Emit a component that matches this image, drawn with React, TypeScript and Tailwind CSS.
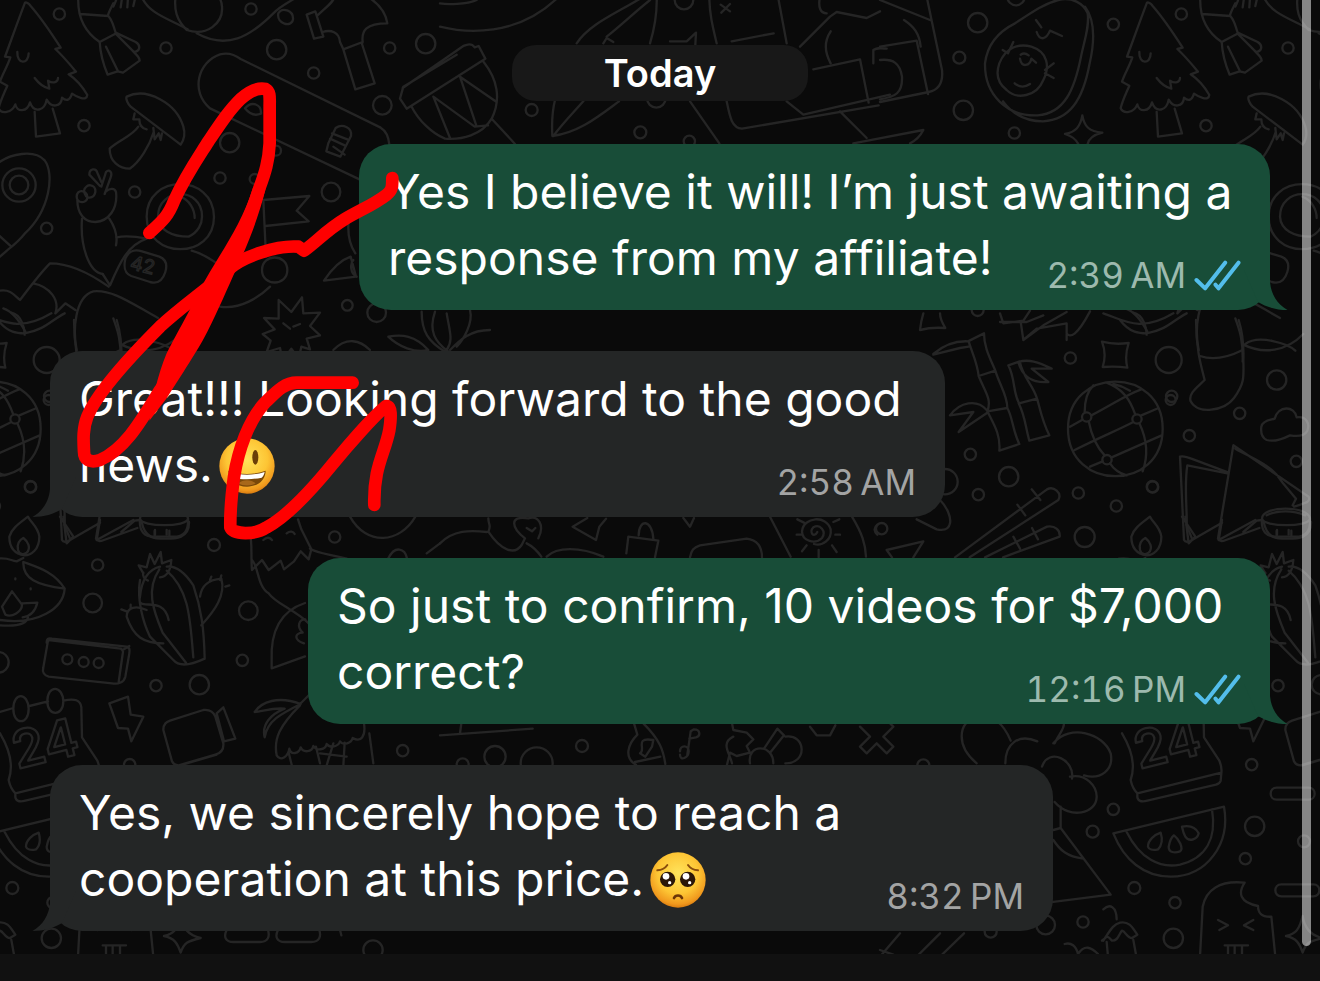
import React from "react";
import { clsx } from "clsx";

type Message = {
  id: number;
  lines: string[];
  time: string;
  mine: boolean;
  width: string;
  emoji?: "grin" | "pleading";
};

const MESSAGES: Message[] = [
  { id: 1, lines: ["Yes I believe it will! I’m just awaiting a", "response from my affiliate!"], time: "2:39\u2009AM", mine: true, width: "w-[911px]" },
  { id: 2, lines: ["Great!!! Looking forward to the good", "news."], time: "2:58\u2009AM", mine: false, width: "w-[895px]", emoji: "grin" },
  { id: 3, lines: ["So just to confirm, 10 videos for $7,000", "correct?"], time: "12:16\u2009PM", mine: true, width: "w-[962px]" },
  { id: 4, lines: ["Yes, we sincerely hope to reach a", "cooperation at this price."], time: "8:32\u2009PM", mine: false, width: "w-[1003px]", emoji: "pleading" },
];

// Wallpaper artwork is drawn on a 3x grid and repeats every 3366 units
const TILE = 3366;

const DOTS: [number, number, number][] = [
  [178, 42, 17], [498, 144, 17], [830, 149, 29], [941, 219, 17], [1169, 144, 17], [1277, 131, 29],
  [1147, 316, 28], [252, 377, 17], [689, 428, 29], [828, 452, 15], [660, 534, 17], [764, 537, 15],
  [993, 576, 28], [404, 576, 17], [140, 685, 17], [753, 27, 17], [1042, 916, 16], [1130, 938, 28],
  [57, 555, 28], [57, 555, 50], [92, 1461, 17], [146, 1200, 15], [293, 1695, 17], [278, 1809, 28],
  [642, 1635, 18], [1004, 1611, 17], [745, 1832, 28], [-5, 1987, 31], [468, 2057, 17], [598, 2054, 29],
  [727, 1981, 17], [1208, 2252, 17], [1119, 2850, 29], [202, 1978, 15], [251, 1986, 15], [296, 1989, 15],
  [1595, 330, 18], [1921, 397, 18], [2068, 424, 17], [2052, 0, 28], [1969, 295, 28],
  [2933, 68, 29], [2878, 173, 18], [2890, 331, 29], [3043, 399, 17], [3340, 73, 17], [2933, 930, 18], [3048, -10, 26],
  [3211, 1074, 17], [3506, 1080, 39], [3830, 1140, 29], [3515, 1189, 17], [3568, 1307, 17], [3719, 1240, 17],
  [3889, 1384, 17], [2911, 1363, 17], [3026, 1430, 29], [2935, 1484, 17], [2835, 1445, 38], [3235, 1479, 17],
  [3457, 1460, 17], [3349, 1518, 17], [3254, 1611, 30], [2645, 1586, 17],
  [3340, 2428, 17], [3278, 2495, 18], [3764, 2479, 29], [3736, 2576, 17], [3403, 2664, 18], [3525, 2708, 17],
  [3520, 2815, 29], [3249, 2766, 17], [3137, 2775, 28], [3755, 2294, 17], [3912, 2524, 18], [2972, 2795, 18],
  [1485, 2270, 32], [1746, 2238, 18], [1388, 2293, 18], [1610, 2290, 48], [2770, 2296, 18],
  [3260, 1251, 14], [3411, 1257, 14], [3321, 1379, 14],
];

const SHAPES = [
  // pine tree
  "M75 8C55 60 30 130 15 170l16 2C22 200 8 220 0 245l22 12C10 285 0 305-4 325c8 18 40 14 50-12 4 24 36 24 44-6 12 34 44 26 50-8 14 26 44 22 46-6 14 12 24 8 30-12 14 10 44 24 46 4-14-24-32-46-56-62l22-8c-20-24-40-48-62-68l16-4C148 90 120 50 92 18c-6-8-14-12-17-10Z",
  "M104 336l4 74 72-10-22-74M52 156c-2 38 34 38 34 4M104 234c12 16 28 28 44 32l-4-24c16 10 30 4 30-8",
  // bow
  "M235-10c-4 70 26 110 64 136 2 30 10 66 24 98l30-10 16 4 50-36c0-10-10-18-18-26 20-2 22-20 6-30l-60-28c-6-16-8-34-22-50l-84-6M340 10c-10 20-14 26-16 36M299 126l50-26M318 140l36 74M350 104l50 50",
  "M340 20c4-10 8-14 10-28M362 22l4-28M382 22l2-30M400 18l6-26M425-10c20 50 80 66 138 98",
  // cable
  "M560 90C530 60 520 30 528-20M560 90c60 20 110-20 106-70 0-20-10-30-16-40M590 100c90 50 160 10 230-60 20-20 40-30 60-42M835 40c10-20 46-10 44 18-4 26-50 14-44-18Z",
  // hammer
  "M920 44l26-10 24 76-28 6ZM955 44c20-20 50-40 50-60M968 96c24-8 50 0 52 30l10 22 36 120 58-18-38-118 2-6c-4-34 10-56 74-56-6-40-30-60-50-74M1030 148l58-22",
  // skateboard
  "M630 325c-60-50-36-140 30-162 24-6 46 2 62 14l420 206c20 12 24 30 26 50M630 325l450 214M735 325c20-24 50-12 48 16-20 8-34 2-48-16Z",
  // bolt between the wheels
  "M985 430l22-46c20-14 50-2 46 24l-32 62-42-16ZM996 400l46 18M990 416l44 20M1000 440l34 24",
  // mushroom
  "M380 290c60-30 150 20 170 90 6 20 2 40-8 54L392 320c-8-8-16-24-12-30ZM404 340l-4 18 18 0c0 20 10 28 22 30M460 384l4 34 12-18 6 20 4-20M415 380c-20 30-60 40-86 66 0 40 30 60 60 60 30-20 60-70 72-110",
  // map pin
  "M0 485c30-20 100-40 134-4 30 40 16 150-60 220-16 20-40 40-50 48L0 770M-10 700l44 40",
  // peace hand
  "M300 558l-32-34c0-20 20-20 24-6l12 28M304 560l14-44c10-10 20 0 14 16l-18 50M230 590c0-24 30-20 32 0 0 24-32 20-32 0ZM252 572c6-24 36-20 34 4-4 20-30 26-34-4ZM232 600c0 40 20 66 54 66 40-2 68-40 62-90-4-14-20-10-30-2M246 656c-6 80 20 160 62 166M328 656c20 30 24 60 20 80",
  // magnifier
  "M440 650c0-130 200-130 202 0 0 130-202 130-202 0ZM474 650c0-90 134-90 132 0 0 20-10 46-40 60-50 0-90-20-92-60ZM540 590c30 10 44 40 44 64M575 752c40 10 80 40 110 66M350 712c30-6 60-2 90 4M440 716c-60 20-84 80-110 140l-22-34",
  "M376 776c10-24 30-28 50-22l52 16c20 8 24 26 18 46-8 26-24 36-46 30l-56-18c-20-8-24-24-18-52Z",
  // shoe
  "M0 872c30-4 40 10 60 28 30-40 60-80 90-110 60 0 120 30 176 70M100 850c50 10 80 50 66 90l30-30 30 20M10 925c30 10 50 40 66 70M230 1050c-12-60-6-160 50-176 60-6 120 40 194 80M340 955c10 30 24 60 22 130M370 1032c40-30 130 0 150 20",
  // flag
  "M790 600l138-12-38 44 36 32-130 14M790 600l8 170M786 810c0-50 76-50 76 0s-76 50-76 0ZM660 920c60 10 120-30 150-60",
  // whistle
  "M1046 660c-4 40 0 70 20 100M972 842c20-30 44-60 80-72l16 60ZM1060 780c-10 10-10 40 10 50",
  // spiky star
  "M836 900l38 36 32-44 4 48 50-2-30 40 30 28-40 10 10 32-26-8-8 36-22-30-26 36-8-38-40 12 12-34-24-20 36-14-32-34 44 2ZM850 970l20 16M880 980l20-8",
  // leaves
  "M1165 1010c40-8 80-4 120 40M1165 1010c30 30 80 50 120 40M1265 935c0 60 20 90 70 120M1305 935c-20 60 0 90 40 120M1350 1050c30-30 60-60 120-60M1340 940c10 60 20 80 0 110M1410 930c10 40-20 90-40 110",
  "M1000 1050c40-40 80-30 110 0",
  // oil lamp
  "M-10 1676c40-4 40 6 60 8M50 1684l20-10M70 1686c-2 50 40 70 124 80-30-50-80-64-124-80ZM194 1766c-4 60-80 110-194 94M0 1876c50 4 80-2 84-24M6 1820l30-46 30 40c0 20-30 40-50 30ZM66 1810l46-2c-6 26-20 40-44 44M46 1735v3M92 1765v3",
  // dog
  "M748 1590c10 30 4 80 8 120l30-30 20 30 36-28 10 26 30-24 20-30 24 24 8-30-30-60-10-30M756 1680c20 20 16 80 50 100 20 30 80 50 120 90M930 1646c30 16 50 14 110 30M790 1620c10-10 20-8 26 0M860 1600c10-8 20-6 24 2",
  // cactus
  "M430 1720l-14-24 24 6 10-40 14 30 18-36 4 34 28-10c-2 30-12 50-34 52M430 1718c-4 10 4 20 14 24M506 1860c-16-80-100-20-86-70 4-40 20-80 60-90M478 1708c-40 60-20 120 10 190l70 90M500 1712c70 60 70 150 80 260M420 1740c-10 60 10 130 30 170l70 70c20 24 60 12 94-4-2-90-10-150-34-220-20-30-50-60-80-56M600 1790c4-30 20-50 64-54 14 50-20 96-60 140M440 1830c-30-14-60-10-60 20 20 60 50 80 110 80M630 1740l4-10M660 1740l4-14M380 1834l-16-6M392 1826v-12M676 1760l12-4",
  // cassette
  "M140 1928c0-14 6-14 16-12l224 24c8 2 10 10 8 20l-12 70c-4 16-20 24-40 20l-190-20c-14-4-20-14-16-28l14-80ZM146 1920l216 26c8 4 8 10 6 16l-12 84M368 1950l20-12",
  // calendar
  "M0 2136l40-12M88 2118l56-14M190 2102c34-8 52-2 54 20l2 90 46 70c6 14 8 24 6 38l-2 22c-2 8-8 10-14 12M0 2200c30 50 40 100 26 140 4 20 10 30 20 40l252-62M46 2380l0 12c4 14 16 14 30 10l206-48M40 2126c0-50 44-50 46 0 0 50-46 50-46 0ZM142 2104c0-50 46-50 48 0 0 46-48 46-48 0Z",
  // lightning
  "M328 2110l56-20 8 54 38 6-36 74-10-38-30-2Z",
  // video camera
  "M490 2190c0-20 10-24 20-28l100-32c20-2 30 4 36 20l24 80c2 20-10 30-24 34l-110 32c-10 0-16-4-20-12ZM650 2140l20-18 36 94-34 8ZM540 2296l110-32",
  // palm hut
  "M764 2136c20-30 70-50 138-24-60 30-100 50-108 100-10-40 20-70 60-86-40-4-70 10-90 10ZM900 2112l30-30M900 2116c-60 60-80 100-70 150 12 20 34 4 38-20 4 20 30 16 34-4 8 18 34 14 38-4 10 16 36 12 40-6 10 14 36 8 40-8 10 14 34 6 38-10 24 14 40-4 34-44M866 2258l10 40M948 2240l12 50M1000 2230l-20 66M1034 2228l-4 70M1108 2200l12 90M960 2260l80 10",
  "M815 1985c-4-80 20-150 100-176M815 1985l0 20 100-36M912 1930c-30-10-30-30-4-32-20-20-10-40 8-40",
  // drum
  "M1210 260l160-96M1210 260l-10 36 20 30M1220 326l236-150-20-38-12 4c-10-14-24-8-34-4l-182 126M1235 320c20 40 60 80 100 96 50 4 110-10 140-60 30-60 16-120-24-170M1300 290l50 124M1300 290l124 90 40-4M1380 230l50 150M1380 230l110 76M1475 356l70 76",
  "M1320 80c80 20 230 30 350-84M1320 10c20 4 80 4 110-10",
  // paper plane, ship
  "M1730 130c40-60 120-90 200-140M1820 110c50-40 80-70 130-110M1970-10c2 60-8 100-20 140M1810 130l10-16 20 12M2010 124l50 0 28-26-2 36M1665 300c-10 40-10 70-8 108 80-10 140-60 200-104M1660 408c30-40 60-70 90-104M2070 304l88 126",
  "M2128-10c0 50 10 90 22 140M2334-10l26 140M2195 124l126-24M2162 14l28 20M2190 12l-26 26M2180 304c10 50 16 80 46 82l410-70M2360 304l50 40 260-60M2440 208l140-30 26 130M2520 334l80 80",
  "M2400 140l90-90 20-14 90 18 40-20M2460-10c-6 30 0 50 20 50M2492 94c-20 30-20 60 0 96M2620 190v-40c10-8 20-6 40-4M2560 430l210-40c-10 20-20 30-40 40",
  // laptop bag
  "M2640 140l110-18 34 160M2712 60c30 20 46 40 50 80M2640 0l150 60M2780-10l46 220c4 40-10 60-40 66l-146 30M2640 180c40-4 60 10 66 50 2 50-20 60-66 68",
  // avocado
  "M2955 190c6-50 30-90 90-120 60-40 90-60 130-70 40-10 76 10 88 40 6 40-10 80-20 130-20 100-50 170-130 176-90 4-160-60-158-156ZM3255 20c30 40 30 100 14 170-20 110-60 170-140 174-50 0-90-20-120-60M2998 190c20-50 60-60 96-50 50 16 56 60 36 100-20 50-80 60-110 30-26-20-34-46-22-80M3008 150l16 10 16-34M3135 210l26-20M3135 220l26 14M3108 60l16 22M3110 96c10 30 30 20 40-4l36 16M3060 176c4 30 30 20 34 0l14 12M3044 250c16 14 34 10 46 2M3062 164c6-4 16-4 24 2",
  // sparkles
  "M3247 346c6 34 20 48 60 52-24 6-40 14-44 34M3247 346c-6 34-20 50-52 56 20 6 32 14 40 30M2770 940c-6 20-8 30-10 50 30-8 50-8 76-6-10-16-16-30-16-44M3306 1025c30 8 50 8 80 4-8 24-10 50-4 74-26-4-50-4-74-2 8-24 8-50-2-76Z",
  // crown and leaf under the first message
  "M3000 940l10 30 60-8 20-30M3062 965l8 55 60-44 70-40M3070 1020l40-34 90-16 0 50M3200 1000c10 14 30 10 70-66M3310 940c60 20 110 60 210 0M3360 960c30 40 60 40 80 40 60-10 80-40 120-60M3440 1004c0-20-10-60-40-66M3000 966l80 0 50-20",
  // bamboo
  "M2800 1062c30-26 60-40 104-38l48-24c0 40 16 70 34 112l0 0-50 16c-4-40-20-70-30-104M2800 1064l80-20 26-4M2936 1128c20 50 40 70 26 106l60-10c0-40-24-70-36-112M2962 1234c20 40 40 70 36 118l60-20c-20-40-20-80-36-108M2850 1246c30-40 80-50 110-16M2850 1246l70-10-44 60 86-58M3025 1096l34-12c10 50 40 70 52 112l-54 14c-20-40-10-70-32-114ZM3056 1210c20 40 20 70 32 112l60-16c-20-40-26-70-36-108M3055 1086c30-10 60 0 100 20l-60 0 50 40c-50 4-80-20-90-60",
  // ball
  "M3204 1286c0-188 284-188 284 0 0 190-284 190-284 0ZM3254 1236c0-30 6-60 26-80M3210 1280l36-20M3274 1246c60-30 100-60 150-78M3224 1350c80-40 130-60 176-84M3424 1246l52-22M3270 1400l38-16M3335 1372l150-66M3266 1264c8 40 20 74 48 102M3320 1148c50 20 70 50 86 96M3340 1152c20 4 40 14 50 20M3418 1270c24 50 26 100 10 144M3330 1390c10 16 30 30 50 36",
  // stocking
  "M3588 960c0 90 16 140 26 180-20 20-50 40-42 64 20 40 100 30 130-10 30-40 30-60 28-112 2-50-4-90-14-122M3600 1068c40 14 80 6 128-18M3730 1034c60 30 130 20 180-32",
  // cloud
  "M3784 1280c4-20 30-20 40-24 10-40 60-40 66-4 30-4 40 20 32 40-10 20-40 16-52 14-20 10-50 20-70 14-16-8-18-24-16-40Z",
  // playing cards
  "M3540 1370c8-4 20 0 40 8l106 40M3540 1370l12 250c4 8 14 6 24 0l90-52M3562 1396l120 24M3562 1396c-10 60 0 140-2 180l16 40M3700 1336c-10 60-30 180-46 280 4 10 14 8 24 4l100-36M3700 1336l226 154c8 20-20 20-44 30M3706 1346c60 34 110 50 140 100l42 50-10 20M3730 1596l40-34 16-2",
  // bowl
  "M3786 1556c0-40 140-40 144 0-2 26-140 26-144 0ZM3786 1556c-4 40 16 54 40 54h70c30-4 36-30 34-56M3830 1592v14M3874 1592v14M3800 1546c30-16 80-16 116 0",
  // chopsticks
  "M2865 1672l276-204c20-10 46 10 34 32l-266 172M3095 1468l26 32M3052 1514l24 32M2955 1672l186-92c24-4 40 10 38 30l-170 62M3096 1584l18 34M3040 1610l20 36",
  // flame
  "M3394 1610c6-24 30-40 56-60 10 20 30 30 34 60 0 40-26 56-44 56-26-4-46-20-46-56ZM3420 1650c-4-20 4-30 16-36 14 10 24 30 10 44-10 8-22 4-26-8",
  "M2820 1500c20 20 34 50 30 70-4 20-20 22-40 18l-60-30M2660 1650l110-26-30 48M2660 1650l16 22",
  // clouds near the bottom
  "M2930 2290c-60-50-60-120 0-140 50-6 80 20 102 72M3016 2290c0-60 40-90 96-66M3160 2230c50-60 150-30 172 30 10 50-30 80-80 66M3192 2170c0 20-14 30-28 60M3126 2300c20-60 100-20 90 36M3210 2330c50-10 80 30 80 60 0 50-80 70-126 16M3182 2420v64l150 200-190 24M3160 2490l22-6M3160 2520c20 30 40 50 90 56",
  // watermelon
  "M3340 2500l332-80c20 110-50 210-160 210-80 0-140-50-172-130ZM3380 2496c40 80 100 110 160 98 80-20 110-80 96-166M3444 2540c0-20 20-36 38-42 6 20 6 36-8 50-16 4-28 0-30-8ZM3506 2540c4-20 10-30 16-34 14 10 30 40 18 48-16 6-34 4-34-14ZM3546 2480c20-4 40 0 50 20-4 20-30 26-40 10-6-10-8-20-10-30Z",
  // popsicle
  "M3600 2870l8-150c10-50 50-80 126-72-20 30-16 60 40 70 0 20 10 34 40 32l12 120M3654 2760l30 16-26 14M3760 2760l-28 16 28 14M3674 2836h70M3684 2836v26M3704 2836v26M3726 2836v26",
  // dashes
  "M3830 2363h96c24 0 24 36 0 36h-96c-24 0-24-36 0-36ZM3844 2653h96c24 0 24 36 0 36h-96c-24 0-24-36 0-36Z",
  "M3858 2808c30-6 40-20 50-60 6 40 30 60 60 66-40 10-50 14-60 44-10-30-20-44-50-50Z",
  "M680 2790c-10 20-4 36 20 36h80c24 0 30-16 24-36M834 2790c-10 20-4 36 20 36h80c24 0 30-16 24-36M1020 2790l4 16",
  // cupcake
  "M3310 2728c20-20 40-6 40 30M3310 2822c20-30 30-50 50-54 30-6 40 20 52 36l-16 10c-14 0-20-20-30-22-10 10-10 30-30 30-10-10-10-20-30 0M3324 2870l-4-44M3400 2820l8 44M3194 2832c20-6 34 6 40 30 20-30 40-20 60 0",
  "M2640 2870l60-70M2750 2870l70-70M2820 2870l72-70M2640 2850l40 14",
  // strip between the second and third messages
  "M1465 1555c0 20 10 20 0 40 40 60 80 70 100 40l10-20c-40-30-50-70 10-60 30-10 50 20 30 60M1320 1630c40-40 90-40 140-34M1580 1630c20 10 30 20 44 40M1640 1670c30-30 100-30 170 0M1580 1584l16 10 10-10M1718 1580l70 40 10-40 20-24M1718 1580l44-26M1885 1610l-6 50M1885 1610l90 12-10 50M1916 1606c0-50 40-50 44 10M2050 1554l20 26 12-26M2070 1672c4-20 10-30 30-36l140-20c30 4 46 20 46 56M2310 1550l62 120M2556 1550c30 50 40 80 42 120M2632 1574c-12 10-10 20 0 30",
  // sun
  "M2452 1596c-10 20-26 0-12-14 20-12 40 12 26 32-20 20-60 10-60-20 4-44 74-50 86-6 4 30-24 52-50 44M2456 1650v22M2496 1636l14 20M2420 1636l-14 18M2506 1604h14M2390 1604h14M2500 1566l18-8M2412 1568l-20-10",
  // strip between the third and last messages
  "M1320 2206l278-20M1384 2170l-4 30M1902 2170l10 34c-30 30-40 70-4 90M1930 2170c50 50 60 80 66 122M1905 2286l76-16M1960 2220c-60-10-20 30-40 40l16 10 20-30ZM2040 2254c0-20 26-20 26 0s-26 30-26 10M2062 2264l10-70 10-6c20 0 20 20 6 24l-20 4M2196 2170l4 20 40 8 20 20-20 20 10 20-40 10-20-10-10 40M2200 2210c-40 20-10 50-4 80M2292 2246l40-60 20 20-40 50M2356 2210c60-10 70 80 0 80M2250 2290c-10-60 70-60 70 0M2430 2180l20 26h40l16-30M2580 2180l30 30-30 30 20 20 30-30 30 30 20-20-30-30 30-30-20-20",
  "M190 1550l10 80 20-20-40-60M300 1560l-10 60 110-60M425 1566c10 50 40 50 70 50s74 0 72-50M465 1590v14M500 1590v14M1050 1550c50 90 150 80 196 0M1165 1675c20-40 50-30 56 0M1280 1660l40-30",
];

function Doodles() {
  return (
    <svg aria-hidden="true" viewBox="0 0 3960 2862" preserveAspectRatio="xMinYMin slice" className="absolute inset-0 h-full w-full">
      <g fill="none" stroke="#252525" strokeWidth="7" strokeLinejoin="round" strokeLinecap="round">
        {[-TILE, 0, TILE].map((shift) => (
          <g key={shift} transform={`translate(${shift} 0)`}>
            {DOTS.map(([x, y, r]) => (
              <circle key={`${x}-${y}-${r}`} cx={x} cy={y} r={r} />
            ))}
            {SHAPES.map((d) => (
              <path key={d} d={d} />
            ))}
            {shift >= 0 && (
              <text x="52" y="2308" fontSize="156" fontWeight="600" fontFamily="Inter, sans-serif" transform="rotate(-14 52 2308)">24</text>
            )}
            {shift === 0 && (
              <text x="388" y="806" fontSize="58" fontFamily="Inter, sans-serif" transform="rotate(14 388 806)" strokeWidth="4">42</text>
            )}
          </g>
        ))}
      </g>
    </svg>
  );
}

function Scribble() {
  return (
    <svg aria-hidden="true" viewBox="0 0 3960 2862" preserveAspectRatio="xMinYMin slice" className="pointer-events-none absolute inset-0 h-full w-full">
      <g fill="none" stroke="#ff0000" strokeWidth="38" strokeLinecap="round" strokeLinejoin="round">
        <path d="M448 699C485 665 504 650 522 603C555 530 590 480 626 423C665 365 690 328 722 297C750 272 775 262 797 267C812 275 809 295 809 320V430C806 485 795 520 778 565C755 640 720 720 680 800C630 920 580 1040 480 1170C430 1250 380 1345 300 1380C270 1390 252 1380 252 1355C250 1320 248 1285 262 1250C290 1180 380 1080 480 980C550 915 620 870 690 805C730 770 830 735 895 740L912 752C950 725 980 690 1035 657C1080 630 1120 615 1160 584C1180 568 1176 555 1177 534" />
        <path d="M1058 1148H890C850 1148 825 1180 795 1208C745 1262 715 1350 702 1430C694 1490 690 1540 691 1582C700 1604 765 1606 800 1582C860 1550 935 1470 1000 1390C1045 1335 1120 1250 1158 1218C1175 1216 1174 1250 1168 1290C1155 1360 1120 1400 1123 1515" />
      </g>
      <path d="M797 565C780 640 745 730 712 800C680 870 655 930 622 995C600 1040 560 1100 500 1195L448 1262C455 1200 475 1120 500 1060C530 1000 560 950 600 870C650 770 720 690 760 560Z" fill="#ff0000" />
    </svg>
  );
}

function Ticks() {
  return (
    <svg aria-hidden="true" viewBox="946 776 140 93" className="h-[31px] w-[47px]" fill="none" stroke="#53bdeb" strokeWidth="12" strokeLinejoin="round" strokeLinecap="round">
      <path d="M953 836l26 25 60-77M1010 850l9 11 60-77" />
    </svg>
  );
}

function Tail({ mine }: { mine: boolean }) {
  return (
    <svg
      aria-hidden="true"
      viewBox="0 0 54 40"
      className={clsx("absolute bottom-0 h-[40px] w-[54px]", mine ? "-right-[18px] fill-[#184d38]" : "-left-[18px] -scale-x-100 fill-[#242626]")}
    >
      <path d="M10 0H36V12C37 24 43 34 53.500 40C42 40 32 37 24 32Z" />
    </svg>
  );
}

function Emoji({ kind }: { kind: "grin" | "pleading" }) {
  return (
    <svg aria-hidden="true" viewBox="0 0 168 168" className="ml-1.5 inline-block size-[56px] align-[-12px]">
      <defs>
        <radialGradient id={`face-${kind}`} cx="50%" cy="38%" r="62%">
          <stop offset="0" stopColor="#ffe45c" />
          <stop offset="0.600" stopColor="#fdc534" />
          <stop offset="0.900" stopColor="#f0981d" />
          <stop offset="1" stopColor="#d97c10" />
        </radialGradient>
      </defs>
      <circle cx="84" cy="84" r="83" fill={`url(#face-${kind})`} />
      {kind === "grin" ? (
        <>
          <ellipse cx="59" cy="58" rx="9" ry="22" fill="#6b3f08" />
          <ellipse cx="109" cy="58" rx="9" ry="22" fill="#6b3f08" />
          <path d="M28 98c36 13 76 13 112 0 0 28-24 48-56 48s-56-20-56-48Z" fill="#7a4809" />
          <path d="M31 102c34 11 72 11 106 0-2 9-5 13-9 17-28 6-60 6-88 0-4-4-7-8-9-17Z" fill="#fff" />
          <path d="M58 136c14-12 38-12 52 0-14 9-38 9-52 0Z" fill="#a8681a" />
        </>
      ) : (
        <>
          <circle cx="53" cy="82" r="23" fill="#2b1708" />
          <circle cx="113" cy="82" r="23" fill="#2b1708" />
          <circle cx="48" cy="73" r="10" fill="#fff" />
          <circle cx="108" cy="73" r="10" fill="#fff" />
          <circle cx="59" cy="92" r="5" fill="#fff" />
          <circle cx="119" cy="92" r="5" fill="#fff" />
          <path d="M22 55c12-1 24-7 30-16M144 55c-12-1-24-7-30-16" fill="none" stroke="#8a4d0c" strokeWidth="6" strokeLinecap="round" />
          <path d="M72 138c4-10 20-10 24 0" fill="none" stroke="#6b3508" strokeWidth="8" strokeLinecap="round" />
        </>
      )}
    </svg>
  );
}

function Bubble({ message }: { message: Message }) {
  const { lines, time, mine, width, emoji } = message;
  return (
    <li
      className={clsx(
        "relative max-w-full rounded-[32px] px-[29px] pt-[15px] pb-[19px] text-white",
        width,
        mine ? "self-end bg-[#184d38]" : "self-start bg-[#242626]"
      )}
    >
      <Tail mine={mine} />
      <p className="relative text-[48px] leading-[66px]">
        {lines[0]}
        <br />
        {lines[1]}
        {emoji && <Emoji kind={emoji} />}
      </p>
      <div
        className={clsx(
          "absolute right-[29px] bottom-[14px] flex items-center gap-2 text-[35px] leading-[42px] tabular-nums",
          mine ? "text-[#9dbaae]" : "text-[#a3a4a4]"
        )}
      >
        <time>{time}</time>
        {mine && <Ticks />}
      </div>
    </li>
  );
}

export default function App() {
  return (
    <div className="relative flex min-h-screen flex-col overflow-hidden bg-[#111111] font-[Inter,sans-serif]">
      <main className="relative grow overflow-hidden bg-[#0a0a0a]">
        <Doodles />
        <div className="relative flex flex-col px-[50px] pt-[45px] pb-[23px]">
          <h2 className="mb-[43px] w-[296px] self-center rounded-[24px] bg-[#181818] text-center text-[38px] leading-[56px] font-semibold text-white">
            Today
          </h2>
          <ol className="flex flex-col gap-[41px]">
            {MESSAGES.map((message) => (
              <Bubble key={message.id} message={message} />
            ))}
          </ol>
        </div>
        <Scribble />
        <div className="absolute top-0 right-[9px] bottom-2 w-[9px] rounded-b-full bg-white/50" />
      </main>
      <footer className="h-[27px] bg-[#111111]" />
    </div>
  );
}
